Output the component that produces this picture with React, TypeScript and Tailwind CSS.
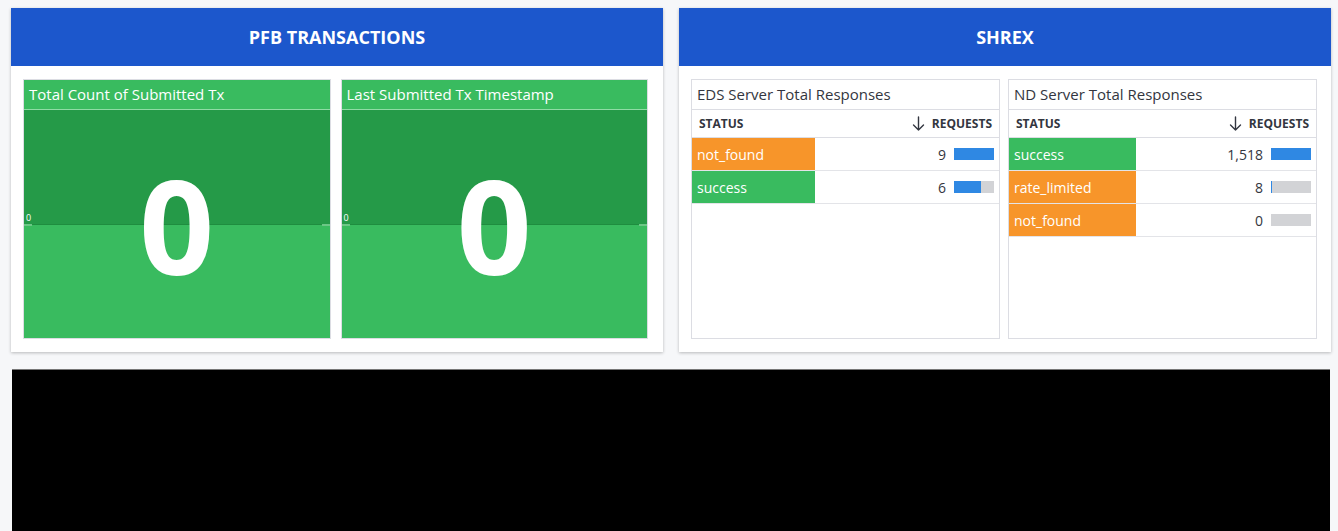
import React from 'react';

// ---- data ----
type Row = { status: string; color: 'orange' | 'green'; count: number; label: string };

const EDS_ROWS: Row[] = [
  { status: 'not_found', color: 'orange', count: 9, label: '9' },
  { status: 'success', color: 'green', count: 6, label: '6' },
];

const ND_ROWS: Row[] = [
  { status: 'success', color: 'green', count: 1518, label: '1,518' },
  { status: 'rate_limited', color: 'orange', count: 8, label: '8' },
  { status: 'not_found', color: 'orange', count: 0, label: '0' },
];

function Panel({ title, children }: { title: string; children: React.ReactNode }) {
  return (
    <div className="flex h-[344px] flex-1 flex-col bg-white shadow-[0_1px_3px_rgba(0,0,0,0.25)]">
      <div className="flex h-[58px] shrink-0 items-center justify-center bg-[#1c57cc] text-[18px] font-bold text-white">
        {title}
      </div>
      {children}
    </div>
  );
}

function Metric({ title }: { title: string }) {
  return (
    <div className="flex h-[260px] flex-col border border-[#dcdde3] bg-[#39bb5f]">
      <div className="flex h-[30px] shrink-0 items-center border-b border-[#8fdca5] pl-[5px] text-[15px] text-white">
        {title}
      </div>
      <div className="relative flex flex-1 flex-col">
        <div className="h-[115px] border-b border-[#1f8d3f] bg-[#259a48]" />
        <div className="flex-1 bg-[#39bb5f]" />
        <span className="absolute left-[2px] top-[103px] text-[9px] leading-none text-white">0</span>
        <span className="absolute left-0 top-[114px] h-[2px] w-[8px] bg-[#6cc786]" />
        <span className="absolute right-0 top-[114px] h-[2px] w-[8px] bg-[#6cc786]" />
        <div className="absolute inset-0 flex items-center justify-center text-[131px] font-bold leading-none text-white">
          0
        </div>
      </div>
    </div>
  );
}

function ArrowDown() {
  return (
    <svg width="13" height="15" viewBox="0 0 13 15" fill="none" stroke="#333640" strokeWidth="1.4" strokeLinecap="round" strokeLinejoin="round">
      <path d="M6.5 1v13M1.5 9l5 5 5-5" />
    </svg>
  );
}

function TopList({ title, rows, cellW }: { title: string; rows: Row[]; cellW: string }) {
  const max = Math.max(...rows.map(r => r.count));
  return (
    <div className="flex h-[260px] flex-col border border-[#dcdde3] bg-white text-[#333640]">
      <div className="flex h-[30px] shrink-0 items-center border-b border-[#dcdde3] pl-[5px] text-[15px]">
        {title}
      </div>
      <div className="flex h-[28px] shrink-0 items-center justify-between border-b border-[#dcdde3] pl-[7px] pr-[7px] text-[12px] font-bold">
        <span>STATUS</span>
        <span className="flex items-center gap-[7px]">
          <ArrowDown />
          REQUESTS
        </span>
      </div>
      {rows.map(r => (
        <div key={r.status} className="flex h-[33px] shrink-0 items-stretch border-b border-[#e3e4e8]">
          <div
            className={
              cellW +
              ' flex items-center pl-[5px] text-[14px] text-white ' +
              (r.color === 'orange' ? 'bg-[#f7952a]' : 'bg-[#39bb5f]')
            }
          >
            {r.status}
          </div>
          <div className="flex flex-1 items-center justify-end gap-[8px] pr-[5px] text-[14px]">
            <span>{r.label}</span>
            <div className="h-[12px] w-[40px] bg-[#d2d3d6]">
              <div className="h-full bg-[#2f88e3]" style={{ width: `${max ? (r.count / max) * 100 : 0}%` }} />
            </div>
          </div>
        </div>
      ))}
    </div>
  );
}

export default function App() {
  return (
    <div
      className="flex min-h-[531px] w-[1338px] flex-col bg-[#f6f7f9] pl-[11px] pr-[7px] pt-[8px]"
      style={{ fontFamily: '"Open Sans", "Noto Sans", sans-serif' }}
    >
      <div className="flex gap-[16px]">
        <Panel title="PFB TRANSACTIONS">
          <div className="grid grid-cols-2 gap-[10px] pl-[12px] pr-[15px] pt-[13px]">
            <Metric title="Total Count of Submitted Tx" />
            <Metric title="Last Submitted Tx Timestamp" />
          </div>
        </Panel>
        <Panel title="SHREX">
          <div className="grid grid-cols-2 gap-[8px] pl-[12px] pr-[14px] pt-[13px]">
            <TopList title="EDS Server Total Responses" rows={EDS_ROWS} cellW="w-[123px]" />
            <TopList title="ND Server Total Responses" rows={ND_ROWS} cellW="w-[127px]" />
          </div>
        </Panel>
      </div>
      <div className="ml-[1px] mr-[1px] mt-[17px] h-[162px] border-t border-[#777] bg-black" />
    </div>
  );
}
